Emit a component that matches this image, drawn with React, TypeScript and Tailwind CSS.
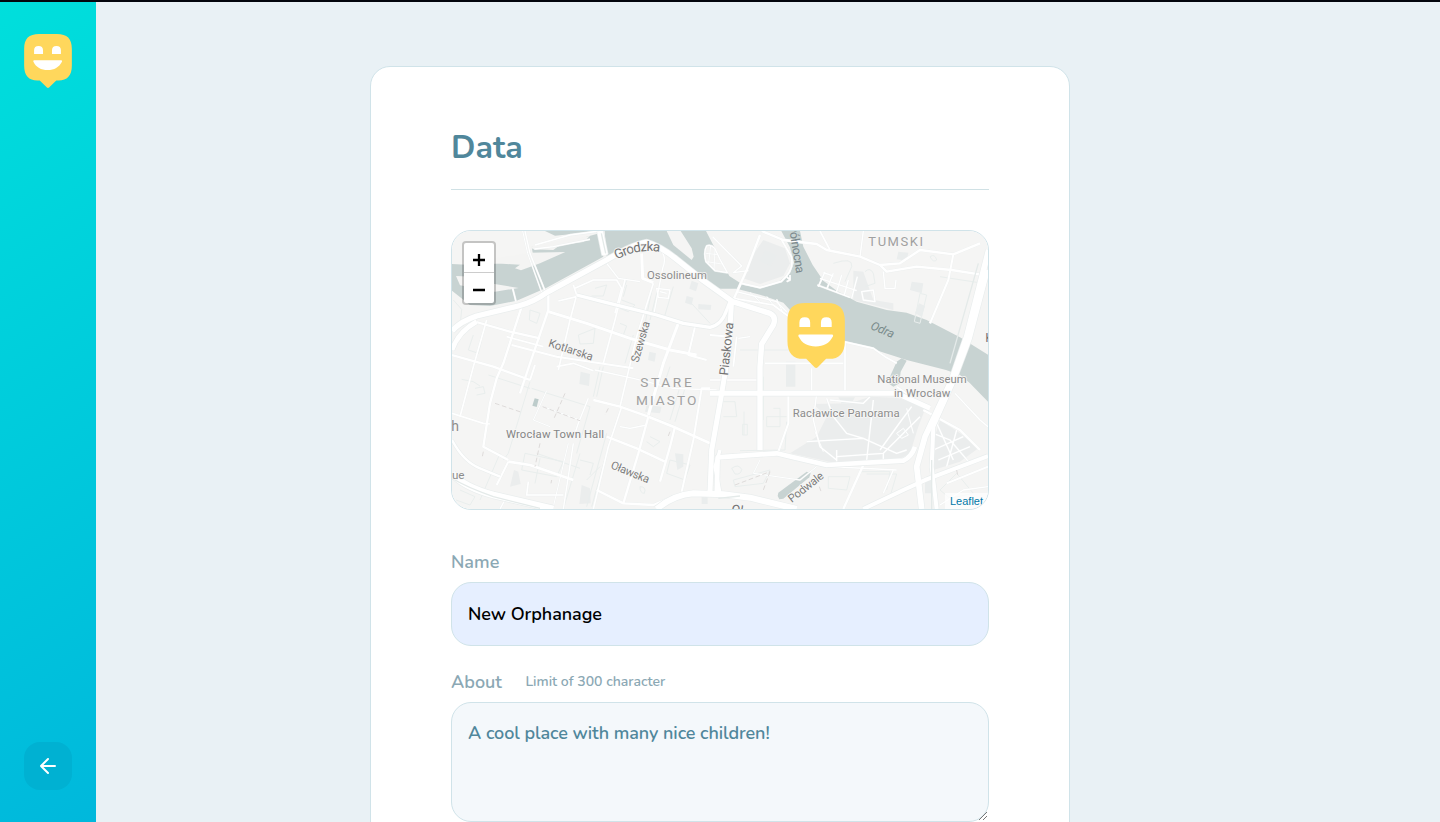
import React from 'react';

type Stroke = [d: string, width: number];

// Map units are thirds of a CSS pixel.
const water = [
  'M36 132L110 136L200 128L280 110L275 80L380 66L440 50L478 40L490 110L320 203L230 242L150 258L90 255L36 212Z',
  'M315 33L475 33L420 40L345 47Z',
  'M494 33L680 33L700 75L755 120L761 110L755 85L722 33L798 33L835 105L868 168L910 195L960 203L1010 190L1050 160L1062 128L1050 82L1024 33L1080 33L1090 80L1118 135L1150 182L1190 212L1250 245L1340 270L1400 278L1460 300L1560 352L1644 404L1644 545L1590 490L1560 465L1518 450L1400 420L1290 385L1200 360L1050 270L1030 248L960 224L890 206L830 206L760 158L690 100L620 56L500 108Z',
  'M1370 425L1385 415L1400 422L1382 455L1378 490L1360 500L1345 490L1352 465Z',
  'M1015 818L1100 755L1112 760L1108 772L1030 836L1018 838L1013 828Z',
];
const islands = [
  'M48 168L100 170L150 190L236 204L165 215L60 196Z',
  'M163 115L270 98L376 96L300 130L243 151L225 145L240 134L165 130Z',
  'M270 80L350 63L450 48L430 66L360 75L340 90L280 88Z',
  'M800 78Q812 72 824 85L842 122L862 158L825 152L798 125Q790 95 800 78Z',
];
const parks = [
  'M1290 530L1370 533L1458 560L1435 620L1410 700L1370 722L1200 732L1050 700L1130 650L1160 590L1120 552L1230 550Z',
  'M1500 600L1560 640L1615 685L1560 725L1480 750L1475 680Z',
  'M935 110L970 60L1035 85L1050 130L1030 168L960 192L910 175Z',
  'M1240 152L1270 155L1300 240L1360 250L1360 270L1240 240Z',
  'M222 750L235 755L242 792L210 800Z',
  'M425 795L450 805L452 850L418 852Z',
];
const buildings = [
  'M975 90L1010 105L992 140L958 122Z', 'M740 228L760 233L755 255L735 248Z', 'M775 252L814 255L812 270L775 268Z',
  'M755 182L775 190L768 214L748 206Z', 'M1375 95L1405 98L1400 122L1370 118Z', 'M1415 185L1450 190L1445 220L1410 210Z',
  'M1437 250L1455 258L1445 290L1425 280Z', 'M422 455L450 462L447 498L418 492Z', 'M1038 425L1066 425L1066 500L1038 500Z',
  'M628 395L648 400L644 425L624 420Z', 'M785 828L803 828L803 852L785 852Z', 'M620 555L665 560L660 580L615 575Z',
  'M1195 532L1245 532L1235 550L1205 550Z', 'M705 700L730 703L730 740L712 750Z', 'M1455 780L1485 780L1485 820L1455 820Z',
];
const outlines = [
  'M40 240L65 268L62 300', 'M100 345L85 390L115 400L125 360', 'M270 270L300 280L290 310L268 300Z', 'M415 345L465 325L460 370L420 372Z',
  'M465 205L500 195L490 228L455 228', 'M545 240L585 255L565 275L540 265', 'M540 310L560 318L550 345L530 338', 'M580 345L555 430',
  'M560 180L530 260', 'M640 190L615 310', 'M655 200L630 300', 'M65 478L100 485L120 498M105 505L130 500L135 520L110 525',
  'M270 485L205 700L190 720', 'M275 505L450 560L410 700', 'M145 465L270 505', 'M480 440L460 530', 'M490 440L470 530',
  'M180 700L120 840', 'M255 700L370 725L350 770L245 750Z', 'M300 715L285 790', 'M420 700L370 867', 'M500 640L440 860', 'M515 645L455 860',
  'M420 720L460 730L450 765M480 740L440 780', 'M630 650L660 665L640 680L620 665', 'M690 720L750 735L735 780L680 760Z',
  'M720 500L690 600', 'M735 505L705 605', 'M560 195L550 230', 'M700 200L675 285',
  'M900 390L1080 390', 'M970 470L970 600', 'M912 575L912 645M908 613L922 613L922 645L908 645Z', 'M1000 565L1020 565L1020 620L980 620L980 590L1040 590',
  'M1165 565L1240 580L1230 600L1170 590', 'M1440 220L1460 225L1440 310L1423 305Z', 'M1040 605L1035 690L900 692', 'M880 780L990 750L970 790L885 800Z',
  'M875 745Q895 730 905 748Q903 765 885 762Z', 'M1165 770L1230 770L1220 810L1165 805Z', 'M1260 755L1350 755L1340 810', 'M1280 762L1370 762L1350 830',
  'M1500 810L1550 760L1600 820L1530 835Z', 'M850 545L885 545L890 590L850 590', 'M600 800Q620 800 613 820Q600 820 600 800',
  'M60 810L105 830L90 855L48 840', 'M1180 130Q1240 110 1235 140L1215 185', 'M1275 155Q1290 140 1300 160L1305 190L1275 200',
  'M1470 110Q1485 100 1490 120Q1480 130 1470 110', 'M1500 170L1630 190', 'M745 240L810 310', 'M290 700L420 745', 'M690 440L670 500',
];
const minor: Stroke[] = [
  ['M255 33L270 100L318 220', 4], ['M248 33L263 100L308 225', 3], ['M285 75L390 45L480 33', 5], ['M283 87L340 80L450 58', 4],
  ['M218 205L228 245', 4], ['M245 260L190 430L170 475L150 550L130 680L205 720', 7], ['M325 225L325 270L270 430L240 520', 7],
  ['M140 300L100 440L60 590', 5], ['M88 300L210 335L300 355', 7], ['M325 275L440 310L570 355L690 390L770 405', 9],
  ['M36 405L160 440L270 480', 7], ['M215 375L350 410L580 445', 6], ['M200 350L310 380', 5], ['M400 195L410 225L390 300L355 450', 5],
  ['M405 205L460 180L530 180L545 205L525 280', 5], ['M355 243L410 230', 5], ['M605 100L608 175L640 188', 9], ['M500 130L535 175L600 185', 4],
  ['M555 180L525 300L490 430', 5], ['M640 190L590 350L540 560', 5], ['M665 95Q680 115 668 145L640 290', 4], ['M715 310L670 430L625 585', 9],
  ['M765 320L745 405L800 420', 6], ['M460 540L540 560L625 590', 7], ['M625 590L700 620L810 670', 8], ['M625 590L595 700L550 850', 7],
  ['M500 650L590 685L675 725', 7], ['M810 505L785 505L760 660L725 815', 6], ['M705 620L690 680L660 785', 7],
  ['M545 560L505 680L460 867', 5], ['M445 535L415 610L405 640', 4], ['M320 512L280 600L330 620', 3], ['M310 560L420 600', 3],
  ['M36 580L130 610L150 612', 5], ['M205 725L170 795', 6], ['M205 725L270 735L400 780', 8], ['M265 785L260 825L370 825', 5],
  ['M470 810L550 850L640 855L700 830L760 815', 7], ['M465 450L580 475L700 505L830 510', 4], ['M540 620L570 625L620 615', 4],
  ['M180 867L200 830', 4], ['M400 670L370 867', 4], ['M385 670L340 860', 3], ['M350 440L400 430L460 452', 5], ['M270 480L285 435', 6],
  ['M965 33L1030 60L1130 72L1160 90L1260 110L1320 135L1380 130L1440 90L1540 103L1620 70', 7], ['M1140 33L1170 90', 5], ['M1270 33L1260 110', 4],
  ['M1320 135L1340 155L1430 140L1535 150L1618 163', 7], ['M1540 103L1525 180L1470 310', 6], ['M1330 155L1335 205L1365 205L1368 180', 4],
  ['M818 50L905 138L880 158L925 152', 4], ['M960 45L920 150L880 240', 7], ['M880 235L1000 255L1060 300', 5], ['M890 215L1010 245L1040 275', 4],
  ['M1025 60L1054 110Q1064 150 1024 184L960 203L905 190', 5], ['M930 218L960 245M980 230L1005 262M1010 238L1030 280', 3],
  ['M1210 365L1300 385L1335 410L1370 430', 5], ['M810 345L870 350L870 240', 6], ['M890 350L880 440', 5], ['M895 355L930 350', 4],
  ['M1215 365L1215 520', 5], ['M1115 445L1115 520', 4], ['M975 430L1210 430', 5], ['M1045 520L1045 610L1015 695', 6], ['M810 480L950 480', 5],
  ['M1130 520L1120 600L1140 680L1190 720', 4], ['M1160 535L1180 590L1220 640L1270 655', 4], ['M1300 540L1280 720', 4], ['M1440 590L1330 700L1190 710', 4],
  ['M1415 560L1385 600L1320 690', 4], ['M1100 665L1270 655L1370 700L1400 690', 4], ['M1170 540L1270 550L1290 530', 4], ['M1190 690L1190 725', 4],
  ['M1330 700L1330 725', 4], ['M1400 565L1420 640', 3], ['M1370 640L1390 625L1405 645L1385 655Z', 3], ['M1125 635L1150 695', 3],
  ['M1490 610L1540 720M1480 690L1570 650M1495 720L1590 680M1480 640L1530 660L1590 730M1550 630L1520 740', 4],
  ['M1450 570L1560 630L1620 690', 7], ['M1545 520L1620 600L1644 620', 4], ['M1370 500L1470 570', 5], ['M1270 735L1210 867', 7],
  ['M1360 750L1330 820', 4], ['M1170 740L1370 750', 4], ['M960 720L940 760L1080 780L1130 740', 3], ['M1644 740L1520 790', 6], ['M1500 855L1570 810L1644 800', 4],
  ['M1155 155L1135 200M1180 160L1160 208M1205 165L1190 215M1225 180L1213 225M1252 170L1235 235M1140 175L1250 212M1150 158L1180 168M1132 195L1230 232', 4],
  ['M1265 215L1300 210L1305 245L1270 240Z', 4], ['M800 78Q812 72 824 85L842 122L862 158L825 152L798 125Q790 95 800 78Z', 4], ['M798 100L832 104M812 78L806 130M825 88L822 150M800 125L845 132', 2.5],
  ['M1040 170L1050 180L1040 185M1050 180L1050 165', 4], ['M650 205L690 210L685 235L655 232ZM660 215L680 220', 4],
];
const major: Stroke[] = [
  ['M36 333Q60 305 110 288L235 258Q280 247 320 218L500 120Q580 72 620 67Q660 78 710 118L790 182L878 245L990 280Q1010 290 1000 315L965 372L960 440L960 690', 16],
  ['M36 390Q55 335 110 305', 14], ['M480 33L495 105', 18], ['M410 225L500 248L650 285L730 310L810 322Q845 315 860 270L872 240', 10],
  ['M875 240L865 400L845 520L815 690L810 815', 15], ['M810 520L1370 520L1470 565', 15], ['M830 830L833 712L1010 700L1060 712L1160 735L1390 722Q1415 710 1425 680', 14],
  ['M1646 90L1580 350L1535 480L1455 650L1430 740L1445 867', 17], ['M1644 150L1590 355L1545 475L1480 620L1475 740L1490 867', 12],
  ['M1270 867L1390 810L1460 778L1644 708', 12], ['M36 760Q70 800 160 825L340 867', 20], ['M36 660Q70 725 120 745L180 770', 7],
  ['M650 867Q700 825 760 820L850 823L930 833L1070 867', 18], ['M840 690L825 740L840 820', 10],
];

const labels = [
  { t: 'Ossolineum', x: 621, y: 178, s: 34, w: 180, c: '#8c8c8c', r: 0 },
  { t: 'Kotlarska', x: 323, y: 379, s: 34, w: 139, c: '#7c7c7c', r: 18 },
  { t: 'Szewska', x: 595, y: 429, s: 34, w: 126, c: '#7c7c7c', r: -74 },
  { t: 'Piaskowa', x: 864, y: 467, s: 38, w: 159, c: '#737373', r: -84 },
  { t: 'STARE', x: 601, y: 502, s: 41, w: 154, c: '#a0a0a0', r: 0 },
  { t: 'MIASTO', x: 588, y: 554, s: 41, w: 181, c: '#a0a0a0', r: 0 },
  { t: 'TUMSKI', x: 1285, y: 77, s: 39, w: 164, c: '#a0a0a0', r: 0 },
  { t: 'Północna', x: 1046, y: 16, s: 37, w: 147, c: '#7b898d', r: 81 },
  { t: 'Odra', x: 1289, y: 326, s: 36, w: 74, c: '#7a8b8b', r: 23 },
  { t: 'National Museum', x: 1312, y: 489, s: 34, w: 268, c: '#8c8c8c', r: 0 },
  { t: 'in Wrocław', x: 1362, y: 530, s: 34, w: 169, c: '#8c8c8c', r: 0 },
  { t: 'Racławice Panorama', x: 1058, y: 591, s: 34, w: 321, c: '#8c8c8c', r: 0 },
  { t: 'Wrocław Town Hall', x: 198, y: 653, s: 34, w: 294, c: '#858585', r: 0 },
  { t: 'Oławska', x: 510, y: 744, s: 34, w: 122, c: '#7c7c7c', r: 22 },
  { t: 'Podwale', x: 1055, y: 849, s: 34, w: 125, c: '#7c7c7c', r: -38 },
  { t: 'h', x: 34, y: 632, s: 42, w: 21, c: '#8c8c8c', r: 0 },
  { t: 'ue', x: 36, y: 778, s: 35, w: 37, c: '#8c8c8c', r: 0 },
  { t: 'Oł', x: 873, y: 880, s: 38, w: 36, c: '#737373', r: 8 },
  { t: 'K', x: 1636, y: 365, s: 38, w: 22, c: '#737373', r: 0 },
];

function Face({ className }: { className: string }) {
  return (
    <svg viewBox="0 0 144 163" className={className} aria-hidden="true">
      <path d="M45 0H99C130 0 144 14 144 45V95C144 126 130 140 104 140H97L76 161Q72 165 68 161L47 140H40C14 140 0 126 0 95V45C0 14 14 0 45 0Z" fill="#ffd75c" />
      <path d="M30 60V49Q30 36 43.500 36T57 49V60ZM84 60V49Q84 36 97.500 36T111 49V60Z" fill="#fff" />
      <path d="M30 79H112Q116 79 114 84C105 101 91 109 71 109S36 101 28 84Q26 79 30 79Z" fill="#fff" />
    </svg>
  );
}

function CityMap() {
  return (
    <svg viewBox="36 33 1608 834" className="block h-full w-full" fill="none" strokeLinejoin="round">
      <rect x="36" y="33" width="1608" height="834" fill="#f5f5f4" />
      {parks.map((d) => <path key={d} d={d} fill="#ebeded" />)}
      {water.map((d) => <path key={d} d={d} fill="#c8d3d2" />)}
      {islands.map((d) => <path key={d} d={d} fill="#f4f4f3" />)}
      {buildings.map((d) => <path key={d} d={d} fill="#eaeded" />)}
      {outlines.map((d) => <path key={d} d={d} stroke="#e9eeed" strokeWidth="3" />)}
      {minor.map(([d, w]) => <path key={d} d={d} stroke="#edf0f0" strokeWidth={w + 2} />)}
      {minor.map(([d, w]) => <path key={d} d={d} stroke="#fff" strokeWidth={w} />)}
      {major.map(([d, w]) => <path key={d} d={d} stroke="#eaeeee" strokeWidth={w + 4} />)}
      {major.map(([d, w]) => <path key={d} d={d} stroke="#fff" strokeWidth={w} />)}
      <path d="M36 775Q80 802 160 830L300 865M1475 720V867M835 835L900 828M1615 130L1530 430M484 40L497 100" stroke="#e4eae9" strokeWidth="4" />
      <path d="M375 520L340 600M165 550L245 577M300 670L285 740M505 565L495 585M690 635L682 655M130 695L127 710M308 560L420 602M335 780L333 790M990 755L970 810M885 795L990 755M1138 800L1145 820M1550 750L1554 770" stroke="#dedbda" strokeWidth="3" strokeDasharray="14 8" />
      <path d="M284 535L296 538L290 561L277 557Z" fill="#bdcccb" />
      <g fontFamily="Roboto, sans-serif" stroke="#f7f7f6" strokeWidth="5" style={{ paintOrder: 'stroke' }}>
        {labels.map((l, i) => (
          <text key={i} x={l.x} y={l.y} fontSize={l.s} fill={l.c} textLength={l.w}
            stroke={l.t === 'Odra' || l.t === 'Północna' ? 'none' : undefined}
            fontStyle={l.t === 'Odra' ? 'italic' : undefined}
            transform={l.r ? `rotate(${l.r} ${l.x} ${l.y})` : undefined}>{l.t}</text>
        ))}
        <path id="grodzka" d="M530 119Q620 69 720 115" stroke="none" />
        <text fontSize="40" fill="#737373"><textPath href="#grodzka" textLength="134">Grodzka</textPath></text>
      </g>
    </svg>
  );
}

export default function App() {
  return (
    <div className="flex h-[822px] flex-col overflow-hidden bg-[#e9f1f5] font-['Nunito','Lato',sans-serif]">
      <div className="h-0.5 shrink-0 bg-[#03060d]" />
      <div className="flex min-h-0 flex-1">
        <aside className="flex w-24 shrink-0 flex-col items-center justify-between bg-[linear-gradient(329.54deg,#00b8dc_0%,#00dfdc_100%)] py-8">
          <Face className="h-[54px] w-12" />
          <button aria-label="Back" className="flex size-12 items-center justify-center rounded-2xl bg-[#00b1d2]">
            <svg viewBox="0 0 24 24" className="size-6" fill="none" stroke="#fff" strokeWidth="2" strokeLinecap="round" strokeLinejoin="round">
              <path d="M19 12H5M12 19L5 12L12 5" />
            </svg>
          </button>
        </aside>
        <main className="flex-1">
          <form className="mt-16 ml-[274px] h-[900px] w-[700px] rounded-[20px] border border-[#d0e3e9] bg-white px-20 pt-[60px]">
            <h1 className="h-[63px] border-b border-[#d0e1e5] text-[32px] leading-[41px] font-bold text-[#50879b]">Data</h1>
            <div className="relative mt-10 h-[280px] overflow-hidden rounded-[20px] border border-[#d0e3e9]">
              <CityMap />
              <Face className="absolute top-[72px] left-[335px] h-[65px] w-[58.300px]" />
              <div className="absolute top-2.5 left-2.5 w-[34px] overflow-hidden rounded border-2 border-black/20 bg-white bg-clip-padding text-black">
                <div className="flex h-[30px] items-center justify-center border-b border-[#ccc]">
                  <svg viewBox="0 0 12 12" className="mt-[5px] size-3"><path d="M0 6H12M6 0V12" stroke="#000" strokeWidth="2.300" /></svg>
                </div>
                <div className="flex h-[30px] items-center justify-center">
                  <svg viewBox="0 0 12 12" className="mt-1 size-3"><path d="M0 6H12" stroke="#000" strokeWidth="2.300" /></svg>
                </div>
              </div>
              <div className="absolute right-0 bottom-0 bg-white/70 px-[5px] font-['Liberation_Sans',sans-serif] text-[11px] leading-4 text-[#0078a8]">Leaflet</div>
            </div>
            <label className="mt-10 block h-6 text-lg leading-6 font-semibold text-[#8ba8b4]">Name</label>
            <div className="mt-2 flex h-16 items-center rounded-[20px] border border-[#d0e3e9] bg-[#e6efff] px-4 text-lg font-semibold tracking-[-0.05px] text-black">New Orphanage</div>
            <label className="mt-6 flex h-6 items-center text-lg leading-6 font-semibold text-[#8ba8b4]">
              About<span className="ml-[23.500px] text-sm font-semibold">Limit of 300 character</span>
            </label>
            <div className="relative mt-2 h-[120px] rounded-[20px] border border-[#d0e3e9] bg-[#f4f8fb] px-4 py-[18px] text-lg leading-6 font-semibold tracking-[-0.06px] text-[#50879b]">
              A cool place with many nice children!
              <svg viewBox="0 0 10 10" className="absolute right-0 bottom-0 size-2.5"><path d="M1 9L9 1M5 9L9 5" stroke="#777" strokeWidth="1" /></svg>
            </div>
          </form>
        </main>
      </div>
    </div>
  );
}
